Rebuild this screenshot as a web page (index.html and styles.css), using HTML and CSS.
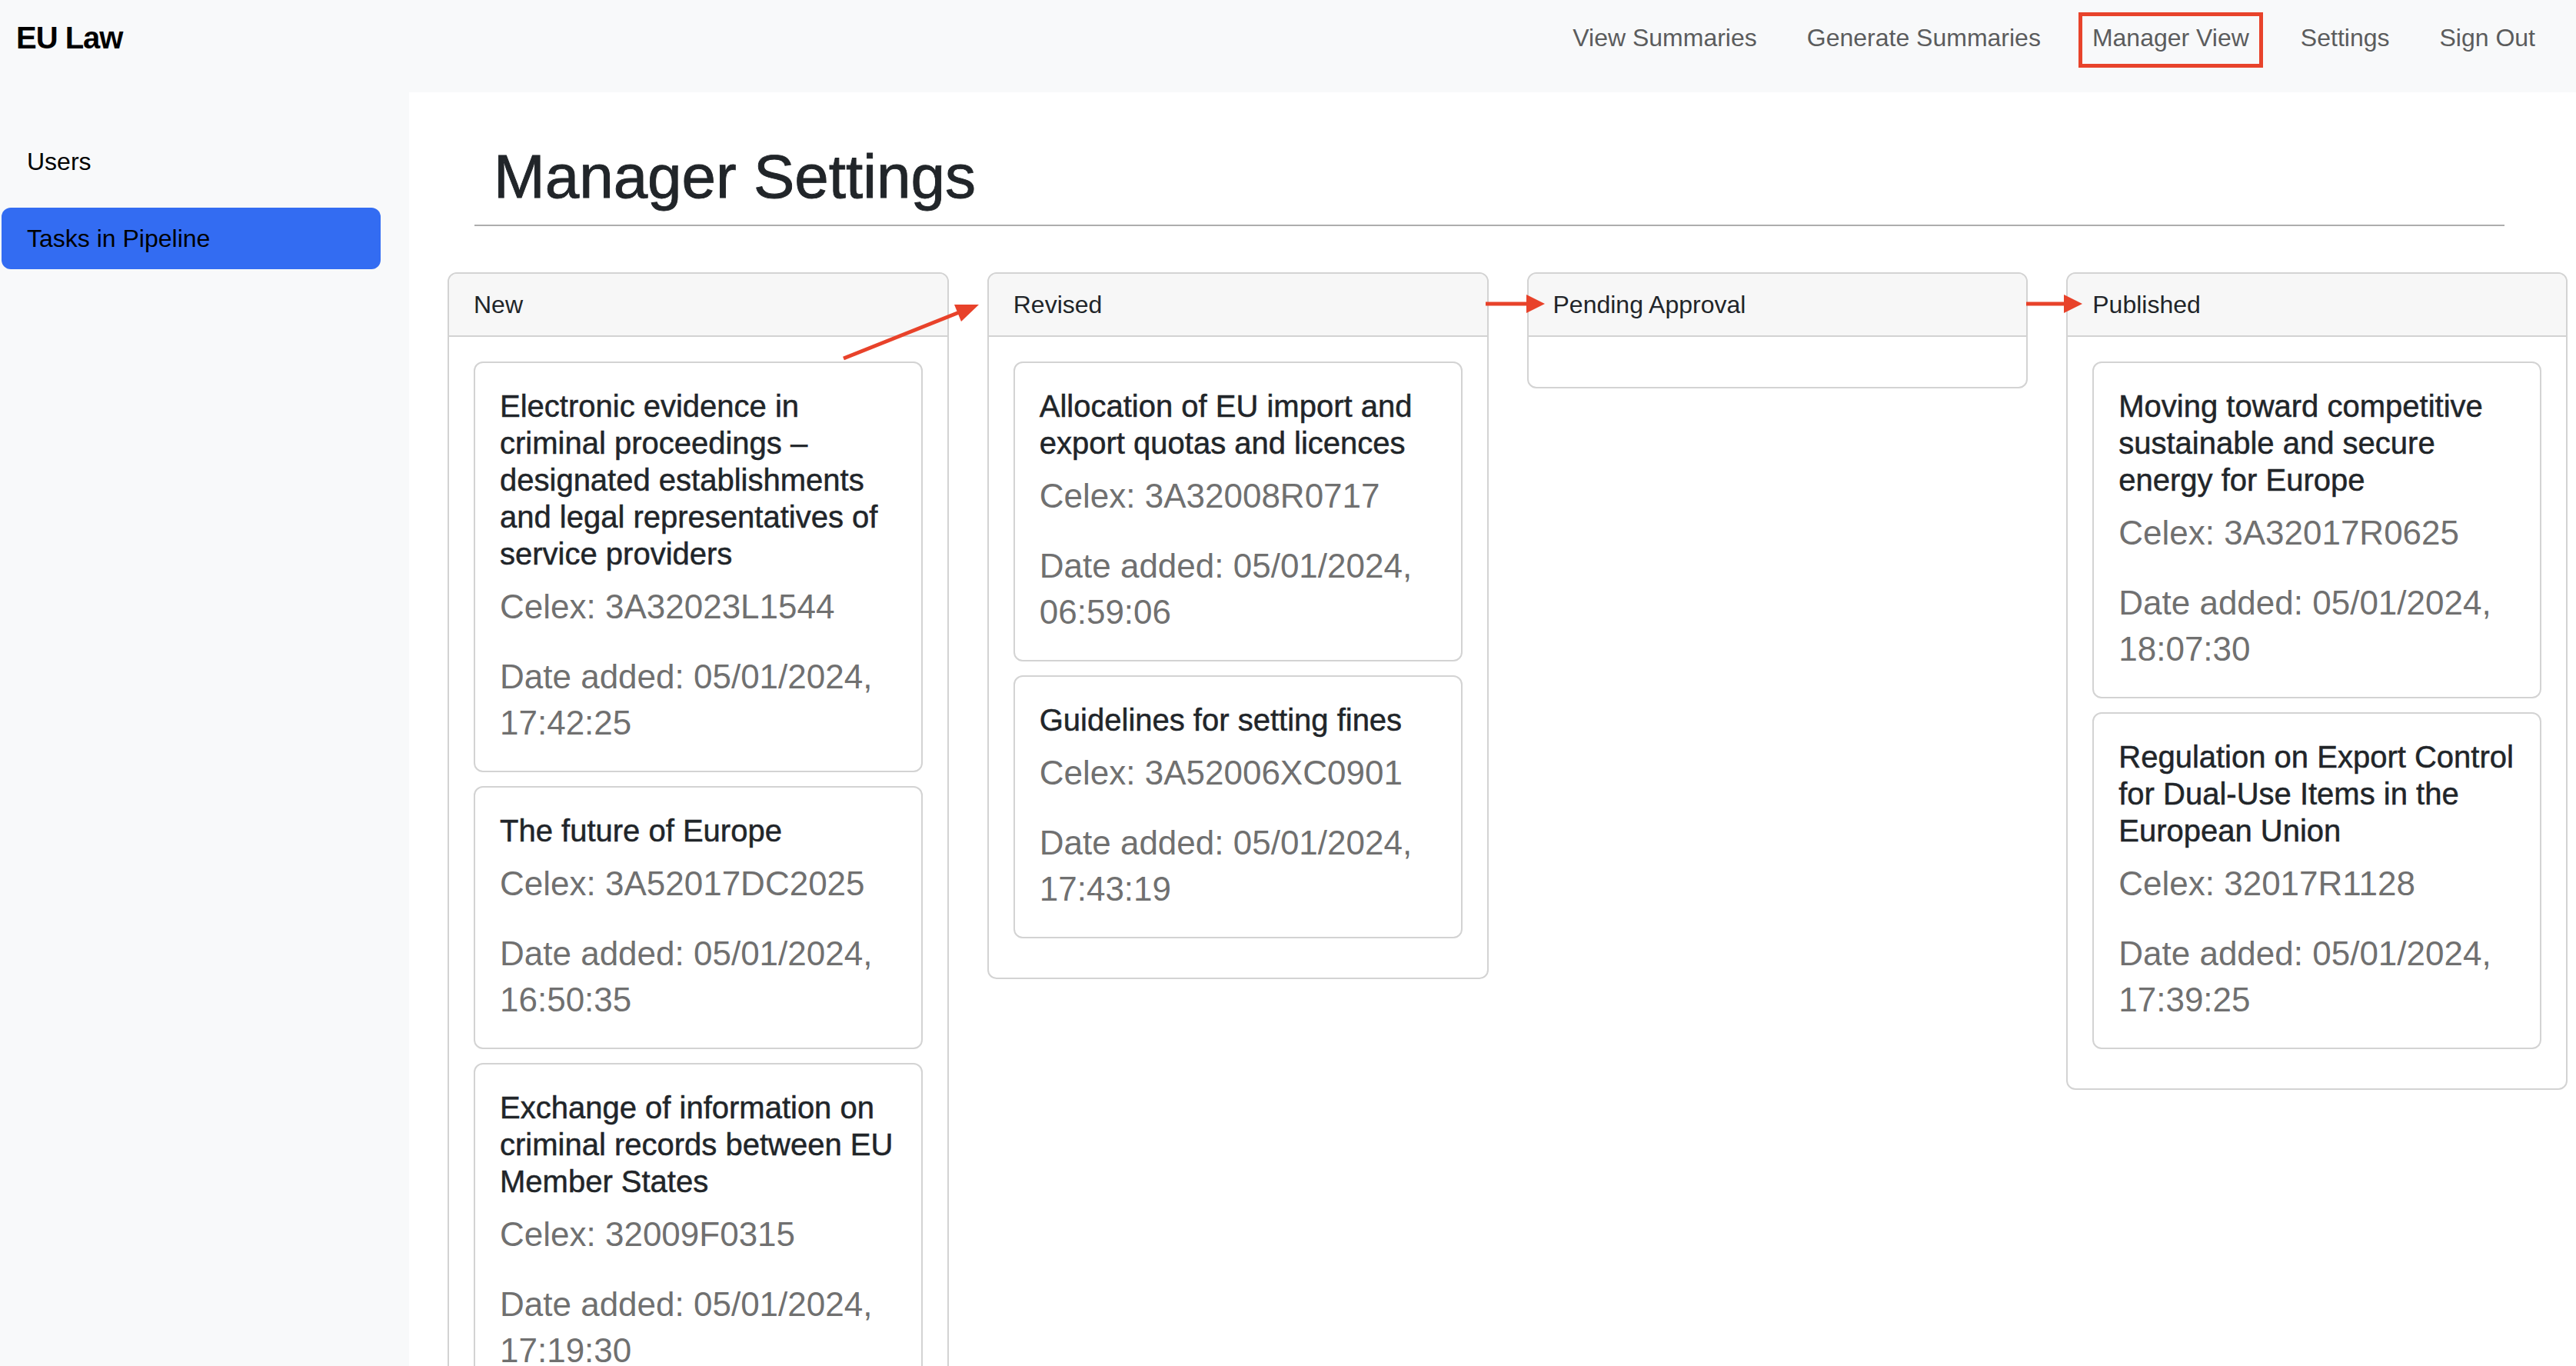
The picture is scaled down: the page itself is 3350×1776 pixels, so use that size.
FILE: index.html
```html
<!DOCTYPE html>
<html lang="en">
<head>
<meta charset="utf-8">
<title>EU Law – Manager Settings</title>
<link rel="stylesheet" href="styles.css">
</head>
<body>
<header class="navbar">
  <a class="brand" href="#">EU Law</a>
  <ul class="nav">
    <li><a class="nav-link" href="#">View Summaries</a></li>
    <li><a class="nav-link" href="#">Generate Summaries</a></li>
    <li><a class="nav-link annotated" href="#">Manager View</a></li>
    <li><a class="nav-link" href="#">Settings</a></li>
    <li><a class="nav-link" href="#">Sign Out</a></li>
  </ul>
</header>
<div class="layout">
  <nav class="sidebar">
    <a class="side-link" href="#">Users</a>
    <a class="side-link active" href="#">Tasks in Pipeline</a>
  </nav>
  <main class="main">
    <div class="page-head">
      <h1 class="page-title">Manager Settings</h1>
      <hr class="divider">
    </div>
    <div class="board">
      <section class="column">
        <div class="column-header">New</div>
        <div class="column-body">
          <div class="task">
            <h5 class="task-title">Electronic evidence in criminal proceedings – designated establishments and legal representatives of service providers</h5>
            <p class="task-meta">Celex: 3A32023L1544</p>
            <p class="task-meta">Date added: 05/01/2024, 17:42:25</p>
          </div>
          <div class="task">
            <h5 class="task-title">The future of Europe</h5>
            <p class="task-meta">Celex: 3A52017DC2025</p>
            <p class="task-meta">Date added: 05/01/2024, 16:50:35</p>
          </div>
          <div class="task">
            <h5 class="task-title">Exchange of information on criminal records between EU Member States</h5>
            <p class="task-meta">Celex: 32009F0315</p>
            <p class="task-meta">Date added: 05/01/2024, 17:19:30</p>
          </div>
        </div>
      </section>
      <section class="column">
        <div class="column-header">Revised</div>
        <div class="column-body">
          <div class="task">
            <h5 class="task-title">Allocation of EU import and export quotas and licences</h5>
            <p class="task-meta">Celex: 3A32008R0717</p>
            <p class="task-meta">Date added: 05/01/2024, 06:59:06</p>
          </div>
          <div class="task">
            <h5 class="task-title">Guidelines for setting fines</h5>
            <p class="task-meta">Celex: 3A52006XC0901</p>
            <p class="task-meta">Date added: 05/01/2024, 17:43:19</p>
          </div>
        </div>
      </section>
      <section class="column">
        <div class="column-header">Pending Approval</div>
        <div class="column-body"></div>
      </section>
      <section class="column">
        <div class="column-header">Published</div>
        <div class="column-body">
          <div class="task">
            <h5 class="task-title">Moving toward competitive sustainable and secure energy for Europe</h5>
            <p class="task-meta">Celex: 3A32017R0625</p>
            <p class="task-meta">Date added: 05/01/2024, 18:07:30</p>
          </div>
          <div class="task">
            <h5 class="task-title">Regulation on Export Control for Dual-Use Items in the European Union</h5>
            <p class="task-meta">Celex: 32017R1128</p>
            <p class="task-meta">Date added: 05/01/2024, 17:39:25</p>
          </div>
        </div>
      </section>
    </div>
  </main>
</div>
<svg class="annotations" width="3350" height="1776" viewBox="0 0 3350 1776" aria-hidden="true">
  <line x1="1097" y1="466" x2="1250" y2="405" stroke="#e8422a" stroke-width="5"/>
  <polygon points="1273,396 1250,418 1241,396" fill="#e8422a"/>
  <line x1="1932" y1="395" x2="1988" y2="395" stroke="#e8422a" stroke-width="5"/>
  <polygon points="1985,383 2009,395 1985,407" fill="#e8422a"/>
  <line x1="2635" y1="395" x2="2687" y2="395" stroke="#e8422a" stroke-width="5"/>
  <polygon points="2684,383 2708,395 2684,407" fill="#e8422a"/>
</svg>
</body>
</html>
```
FILE: styles.css
```css
html, body {
  margin: 0;
}
body {
  font-family: "Liberation Sans", Arial, Helvetica, sans-serif;
  font-size: 32px;
  line-height: 1.5;
  color: #212529;
  background: #ffffff;
}

/* Top navigation */
.navbar {
  display: flex;
  justify-content: space-between;
  align-items: flex-start;
  height: 120px;
  box-sizing: border-box;
  padding: 0 37px 0 21px;
  background: #f8f9fa;
}
.brand {
  margin-top: 19px;
  font-size: 40px;
  line-height: 60px;
  font-weight: 700;
  letter-spacing: -1px;
  color: #000;
  text-decoration: none;
}
.nav {
  display: flex;
  gap: 33px;
  list-style: none;
  margin: 16px 0 0;
  padding: 0;
}
.nav-link {
  display: block;
  padding: 9px 16px 15px;
  line-height: 48px;
  color: #5b5c5d;
  text-decoration: none;
}
.nav-link.annotated {
  border: 5px solid #e8432b;
  padding: 4px 13px 10px;
}

/* Body layout */
.layout {
  display: flex;
  min-height: calc(100vh - 120px);
}
.sidebar {
  flex: none;
  width: 532px;
  box-sizing: border-box;
  padding: 50px 37px 0 2px;
  background: #f8f9fa;
}
.side-link {
  display: block;
  padding: 16px 33px;
  margin-bottom: 20px;
  line-height: 48px;
  color: #000;
  text-decoration: none;
  border-radius: 12px;
}
.side-link.active {
  background: #336cf2;
}

.main {
  flex: 1;
  min-width: 0;
  padding: 0 11px 0 50px;
}
.page-head {
  margin: 0 82px 0 35px;
}
.page-title {
  margin: 62px 0 14px;
  padding-left: 25px;
  font-size: 80px;
  line-height: 96px;
  font-weight: 500;
  -webkit-text-stroke: 0.9px currentColor;
}
.divider {
  border: 0;
  border-top: 2px solid #adadad;
  margin: 0 0 60px;
}

/* Kanban board */
.board {
  display: flex;
  gap: 50px;
  align-items: flex-start;
}
.column {
  flex: 1 1 0;
  min-width: 0;
  border: 2px solid #d3d3d3;
  border-radius: 12px;
  background: #fff;
}
.column-header {
  padding: 16px 32px;
  line-height: 48px;
  background: #f7f7f7;
  border-bottom: 2px solid #d3d3d3;
  border-radius: 10px 10px 0 0;
}
.column-body {
  padding: 32px 32px 33px;
}
.task {
  border: 2px solid #d3d3d3;
  border-radius: 12px;
  padding: 32px;
  margin-bottom: 18px;
  background: #fff;
}
.task-title {
  margin: 0 0 15px;
  font-size: 40px;
  line-height: 48px;
  font-weight: 500;
  -webkit-text-stroke: 0.5px currentColor;
}
.task-meta {
  margin: 0 0 31px;
  font-size: 44px;
  line-height: 60px;
  color: #707070;
}
.task-meta:last-child {
  margin-bottom: 0;
}

/* Red annotation arrows drawn over the page */
.annotations {
  position: absolute;
  top: 0;
  left: 0;
  pointer-events: none;
}
```
